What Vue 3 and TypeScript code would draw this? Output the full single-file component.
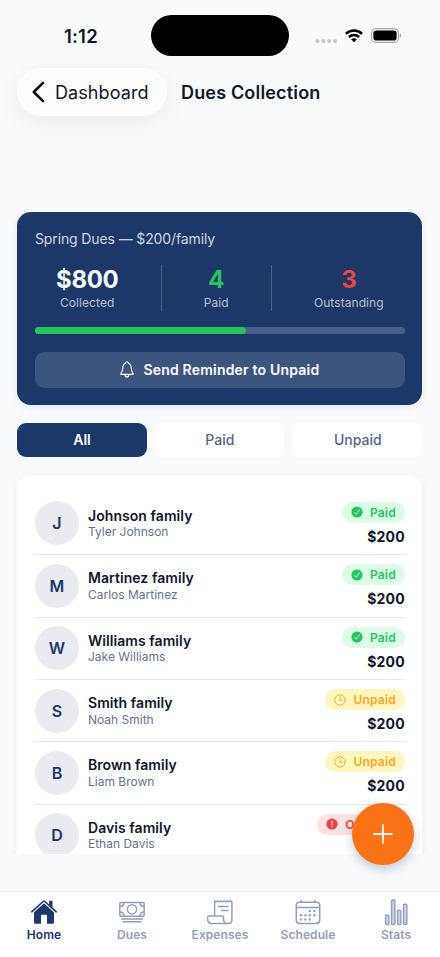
<script setup lang="ts">
import { computed, ref } from 'vue'

type Status = 'paid' | 'unpaid' | 'overdue'
type Filter = 'All' | 'Paid' | 'Unpaid'

interface Family {
  name: string
  player: string
  amount: number
  status: Status
}

const families: Family[] = [
  { name: 'Johnson', player: 'Tyler Johnson', amount: 200, status: 'paid' },
  { name: 'Martinez', player: 'Carlos Martinez', amount: 200, status: 'paid' },
  { name: 'Williams', player: 'Jake Williams', amount: 200, status: 'paid' },
  { name: 'Smith', player: 'Noah Smith', amount: 200, status: 'unpaid' },
  { name: 'Brown', player: 'Liam Brown', amount: 200, status: 'unpaid' },
  { name: 'Davis', player: 'Ethan Davis', amount: 200, status: 'overdue' },
]

const labels: Record<Status, string> = { paid: 'Paid', unpaid: 'Unpaid', overdue: 'Overdue' }
const filters: Filter[] = ['All', 'Paid', 'Unpaid']
const active = ref<Filter>('All')
const tabs = ['Home', 'Dues', 'Expenses', 'Schedule', 'Stats']

const paid = 4
const outstanding = 3
const progress = `${(paid / (paid + outstanding)) * 100}%`

const visible = computed(() =>
  families.filter((f) => active.value === 'All' || (active.value === 'Paid') === (f.status === 'paid')),
)
</script>

<template>
  <div class="screen">
    <div class="status">
      <span class="time">1:12</span>
      <div class="island"></div>
      <div class="signals">
        <svg class="dots" width="23" height="6" viewBox="0 0 23 6" fill="#c3c8d2">
          <circle cx="2.4" cy="3" r="2.1" /><circle cx="8.4" cy="3" r="2.1" /><circle cx="14.2" cy="3" r="2.1" /><circle cx="20.1" cy="3" r="2.1" />
        </svg>
        <svg class="wifi" width="18" height="14" viewBox="0 0 18 14" fill="none" stroke="#000" stroke-width="2.5">
          <path d="M.9 4.8C5.4.5 12.6.5 17.1 4.8" />
          <path d="M3.9 8c2.9-2.6 7.3-2.6 10.2 0" />
          <path d="M6.1 10.3c1.7-1.4 4.1-1.4 5.8 0L9 13.3z" fill="#000" stroke="none" />
        </svg>
        <svg class="battery" width="31" height="15" viewBox="0 0 31 15">
          <rect x=".6" y=".6" width="26.8" height="13.8" rx="4.4" fill="none" stroke="#a0a7b5" stroke-width="1.1" />
          <rect x="2.4" y="2.4" width="23.2" height="10.2" rx="2.8" />
          <path d="M28.8 5.2c1.7.5 1.7 4.1 0 4.6z" fill="#a0a7b5" />
        </svg>
      </div>
    </div>

    <header class="nav">
      <button class="back">
        <svg width="13" height="22" viewBox="0 0 13 22" fill="none" stroke="#0b1020" stroke-width="2.6" stroke-linecap="round" stroke-linejoin="round">
          <path d="M11 1.9 1.8 11l9.2 9.1" />
        </svg>
        <span>Dashboard</span>
      </button>
      <h1>Dues Collection</h1>
    </header>

    <main class="content">
      <section class="summary">
        <p class="plan">Spring Dues — $200/family</p>
        <div class="stats">
          <div class="stat"><strong>$800</strong><span>Collected</span></div>
          <i class="rule"></i>
          <div class="stat green"><strong>{{ paid }}</strong><span>Paid</span></div>
          <i class="rule"></i>
          <div class="stat red"><strong>{{ outstanding }}</strong><span>Outstanding</span></div>
        </div>
        <div class="bar"><div class="fill" :style="{ width: progress }"></div></div>
        <button class="remind">
          <svg width="14" height="17" viewBox="0 0 14 17" fill="none" stroke="#fff" stroke-width="1.1" stroke-linecap="round" stroke-linejoin="round">
            <path d="M1.4 13.4h11.2c.8 0 .9-.7.5-1.1-1-1.1-1.7-2-1.8-4.6C11.2 4.4 10 2.7 8.4 2.2 8.2 1.2 7.7.7 7 .7s-1.2.5-1.4 1.5C4 2.7 2.8 4.4 2.7 7.7c-.1 2.6-.8 3.5-1.8 4.6-.4.4-.3 1.1.5 1.1z" />
            <path d="M5 13.6c.1 1.5.9 2.3 2 2.3s1.9-.8 2-2.3" />
          </svg>
          <span>Send Reminder to Unpaid</span>
        </button>
      </section>

      <div class="filters">
        <button v-for="f in filters" :key="f" :class="{ on: active === f }" @click="active = f">{{ f }}</button>
      </div>

      <section class="list">
        <article v-for="f in visible" :key="f.name" class="row">
          <div class="avatar">{{ f.name[0] }}</div>
          <div class="who">
            <strong>{{ f.name }} family</strong>
            <span>{{ f.player }}</span>
          </div>
          <div class="due">
            <div class="badge" :class="f.status">
              <svg v-if="f.status === 'paid'" width="12" height="12" viewBox="0 0 12 12">
                <circle cx="6" cy="6" r="5.6" fill="#22c55e" />
                <path d="M3.5 6.3 5.2 8.2 8.4 3.9" fill="none" stroke="#dcfce7" stroke-width="1" stroke-linecap="round" stroke-linejoin="round" />
              </svg>
              <svg v-else-if="f.status === 'unpaid'" width="12" height="12" viewBox="0 0 12 12" fill="none" stroke="#f5a623" stroke-width=".9" stroke-linecap="round">
                <circle cx="6" cy="6" r="5.2" />
                <path d="M6 2.7v3.6h2.5" />
              </svg>
              <svg v-else width="12" height="12" viewBox="0 0 12 12">
                <circle cx="6" cy="6" r="5.6" fill="#ef4444" />
                <path d="M6 3v3.6M6 8.7v.1" stroke="#fee2e2" stroke-width="1.2" stroke-linecap="round" />
              </svg>
              <span>{{ labels[f.status] }}</span>
            </div>
            <b>${{ f.amount }}</b>
          </div>
        </article>
      </section>
    </main>

    <button class="fab" aria-label="Add">
      <svg width="20" height="20" viewBox="0 0 20 20" stroke="#fff" stroke-width="1.8" stroke-linecap="round"><path d="M10 1v18M1 10h18" /></svg>
    </button>

    <nav class="tabs">
      <a v-for="(t, i) in tabs" :key="t" :class="{ on: i === 0 }">
        <svg v-if="t === 'Home'" width="28" height="28" viewBox="0 0 28 28">
          <path d="M14 4.7 4 14v10.2c0 .9.6 1.5 1.5 1.5H11v-8.1c0-.5.3-.8.8-.8h4.4c.5 0 .8.3.8.8v8.1h5.5c.9 0 1.5-.6 1.5-1.5V14z" fill="currentColor" />
          <path d="m1.8 13.8 11.3-10.3c.5-.5 1.3-.5 1.8 0l11.3 10.3" fill="none" stroke="currentColor" stroke-width="1.6" stroke-linecap="round" />
          <path d="m2.7 15.1 11.3-10.3 11.3 10.3" fill="none" stroke="#fff" stroke-width=".9" />
          <path d="M19.1 2.8h3.4v7l-3.4-3.1z" fill="currentColor" />
        </svg>
        <svg v-else-if="t === 'Dues'" width="28" height="28" viewBox="0 0 28 28" fill="none" stroke="currentColor" stroke-width="1.5" stroke-linecap="round">
          <rect x="1.8" y="4.4" width="24.4" height="13.8" rx="1.2" />
          <circle cx="14" cy="11.3" r="4.6" />
          <path d="M1.9 8.6c2.5 0 4-1.4 4-3.8M26.1 8.6c-2.5 0-4-1.4-4-3.8M1.9 14c2.5 0 4 1.4 4 3.8M26.1 14c-2.5 0-4 1.4-4 3.8M3.6 20.9h20.8M5.3 23.8h17.4" />
        </svg>
        <svg v-else-if="t === 'Expenses'" width="28" height="28" viewBox="0 0 28 28" fill="none" stroke="currentColor" stroke-width="1.5" stroke-linecap="round" stroke-linejoin="round">
          <path d="M8.6 18V2.8l1.6 1 1.6-1 1.6 1 1.6-1 1.6 1 1.6-1 1.6 1 1.6-1 1.6 1 1.6-1 1.3 1v17.9c0 2.2-1.2 3.8-3.4 3.8H5.4c-2.4 0-3.7-1.7-3.7-4.6V19c0-.6.4-1 1-1h13.8c.6 0 1 .4 1 1v1.8c0 2.8 1.5 4.7 4.1 4.7" />
          <path d="M12.6 8.4H22M15.6 12.4H22" />
        </svg>
        <svg v-else-if="t === 'Schedule'" width="28" height="28" viewBox="0 0 28 28" fill="none" stroke="currentColor" stroke-width="1.5" stroke-linecap="round">
          <rect x="2.3" y="4.3" width="23.4" height="21.2" rx="3.2" />
          <path d="M2.6 9.4h22.8M7.3 2.4v1.8M20.7 2.4v1.8" />
          <g fill="currentColor" stroke="none">
            <circle cx="15.8" cy="13" r="1.2" /><circle cx="20.4" cy="13" r="1.2" />
            <circle cx="7" cy="17.3" r="1.2" /><circle cx="11.4" cy="17.3" r="1.2" /><circle cx="15.8" cy="17.3" r="1.2" /><circle cx="20.4" cy="17.3" r="1.2" />
            <circle cx="7" cy="21.5" r="1.2" /><circle cx="11.4" cy="21.5" r="1.2" /><circle cx="15.8" cy="21.5" r="1.2" />
          </g>
        </svg>
        <svg v-else width="28" height="28" viewBox="0 0 28 28" fill="#cbd5e1" stroke="currentColor" stroke-width="1.4">
          <rect x="3.5" y="17.3" width="3.4" height="9.2" rx=".9" />
          <rect x="9.5" y="2" width="3.4" height="24.5" rx=".9" />
          <rect x="15.5" y="12.4" width="3.4" height="14.1" rx=".9" />
          <rect x="21.5" y="6.2" width="3.4" height="20.3" rx=".9" />
        </svg>
        <span>{{ t }}</span>
      </a>
    </nav>
  </div>
</template>

<style>
body {
  background: #f8fafc;
}
</style>

<style scoped>
* {
  box-sizing: border-box;
}
.screen {
  position: relative;
  width: 440px;
  height: 957px;
  overflow: hidden;
  display: flex;
  flex-direction: column;
  background: #f8fafc;
  color: #0f172a;
  font-family: Inter, 'Liberation Sans', sans-serif;
}
button {
  border: 0;
  padding: 0;
  font: inherit;
  color: inherit;
}
svg {
  display: block;
  flex: none;
}
.status {
  height: 68px;
  flex: none;
  display: grid;
  grid-template-columns: 151px 138px 1fr;
  padding-top: 15px;
}
.time {
  padding-left: 64px;
  font-size: 18.5px;
  line-height: 43px;
  font-weight: 600;
  letter-spacing: 0.2px;
}
.island {
  height: 41px;
  border-radius: 21px;
  background: #000;
}
.signals {
  height: 41px;
  display: flex;
  align-items: center;
  padding-left: 26px;
}
.dots {
  margin-top: 10px;
}
.wifi {
  margin-left: 7px;
}
.battery {
  margin-left: 8px;
}
.nav {
  height: 144px;
  flex: none;
  display: flex;
  align-items: flex-start;
  padding-left: 17px;
}
.back {
  width: 150px;
  height: 48px;
  display: flex;
  align-items: center;
  padding-left: 14.5px;
  gap: 10.5px;
  border-radius: 24px;
  background: #fdfdfe;
  box-shadow: 0 6px 24px rgba(15, 23, 42, 0.07);
  font-size: 18px;
  letter-spacing: 0.08px;
}
h1 {
  margin: 0 0 0 14px;
  font-size: 18px;
  line-height: 49px;
  font-weight: 600;
  letter-spacing: 0.17px;
}
.content {
  height: 642px;
  flex: none;
  overflow: hidden;
  padding: 0.4px 17.6px 0 17.4px;
}
.summary {
  height: 192.6px;
  padding: 17.6px;
  border-radius: 14px;
  background: #1b3868;
  box-shadow: 0 2px 9px rgba(15, 23, 42, 0.08);
  color: #fff;
}
.plan {
  margin: 0;
  font-size: 14px;
  line-height: 18px;
  letter-spacing: -0.12px;
  color: rgba(255, 255, 255, 0.8);
}
.stats {
  display: flex;
  justify-content: space-around;
  margin-top: 17px;
  height: 46px;
}
.stat {
  display: flex;
  flex-direction: column;
  align-items: center;
}
.stat strong {
  font-size: 24px;
  line-height: 29px;
  font-weight: 700;
  letter-spacing: -0.35px;
}
.stat span {
  font-size: 12px;
  line-height: 18px;
  letter-spacing: 0.08px;
  color: rgba(255, 255, 255, 0.7);
}
.green strong {
  color: #22c55e;
}
.red strong {
  color: #ef4444;
}
.rule {
  width: 1px;
  background: rgba(255, 255, 255, 0.22);
}
.bar {
  height: 7px;
  margin-top: 16.5px;
  border-radius: 4px;
  background: rgba(255, 255, 255, 0.2);
}
.fill {
  height: 100%;
  border-radius: 4px;
  background: #22c55e;
}
.remind {
  width: 100%;
  height: 35.6px;
  margin-top: 17.6px;
  display: flex;
  align-items: center;
  justify-content: center;
  gap: 9px;
  border-radius: 9px;
  background: rgba(255, 255, 255, 0.15);
  font-size: 14px;
  font-weight: 600;
  letter-spacing: 0.2px;
}
.filters {
  display: grid;
  grid-template-columns: repeat(3, 1fr);
  gap: 8.8px;
  margin-top: 17.6px;
}
.filters button {
  height: 34.8px;
  border-radius: 9px;
  background: #fff;
  color: #526688;
  font-size: 14px;
  font-weight: 500;
}
.filters .on {
  background: #1b3868;
  color: #fff;
  font-weight: 600;
}
.list {
  height: 500px;
  margin-top: 17.6px;
  padding: 17.6px;
  border-radius: 14px;
  background: #fff;
  box-shadow: 0 2px 9px rgba(15, 23, 42, 0.06);
}
.row {
  height: 62.35px;
  display: flex;
  align-items: center;
  border-bottom: 1px solid #e2e8f0;
}
.row:first-child {
  height: 62.6px;
}
.avatar {
  width: 44px;
  height: 44px;
  border-radius: 50%;
  background: #e9ebf0;
  color: #1b3868;
  font-size: 16px;
  line-height: 44px;
  font-weight: 600;
  text-align: center;
}
.who {
  flex: 1;
  margin-left: 9px;
  padding-top: 0.6px;
  display: flex;
  flex-direction: column;
}
.who strong {
  font-size: 14px;
  line-height: 16.5px;
  font-weight: 600;
  letter-spacing: 0.06px;
}
.who span {
  font-size: 12px;
  line-height: 15px;
  color: #64748b;
}
.due {
  padding-top: 1.2px;
  display: flex;
  flex-direction: column;
  align-items: flex-end;
}
.badge {
  height: 21px;
  display: flex;
  align-items: center;
  gap: 7.5px;
  padding: 0 9px;
  border-radius: 11px;
  font-size: 12px;
  font-weight: 600;
  letter-spacing: 0.15px;
}
.paid {
  background: #dcfce7;
  color: #22c55e;
}
.unpaid {
  background: #fef6bd;
  color: #f5a623;
}
.overdue {
  background: #fee2e2;
  color: #ef4444;
}
.due b {
  margin-top: 5px;
  font-size: 14px;
  line-height: 18px;
  font-weight: 700;
  letter-spacing: 0.2px;
}
.fab {
  position: absolute;
  left: 352px;
  top: 803px;
  width: 62px;
  height: 62px;
  display: grid;
  place-items: center;
  border-radius: 50%;
  background: #f97316;
  box-shadow: 0 4px 11px rgba(27, 56, 104, 0.25);
}
.tabs {
  margin-top: auto;
  height: 66px;
  flex: none;
  display: grid;
  grid-template-columns: repeat(5, 1fr);
  border-top: 1px solid #eceff3;
  background: #fff;
}
.tabs a {
  display: flex;
  flex-direction: column;
  align-items: center;
  padding-top: 6px;
  color: #92a0b9;
  font-size: 12px;
  line-height: 16px;
  font-weight: 600;
  letter-spacing: 0.08px;
}
.tabs span {
  margin-top: 1px;
}
.tabs .on {
  color: #1b3868;
}
</style>
